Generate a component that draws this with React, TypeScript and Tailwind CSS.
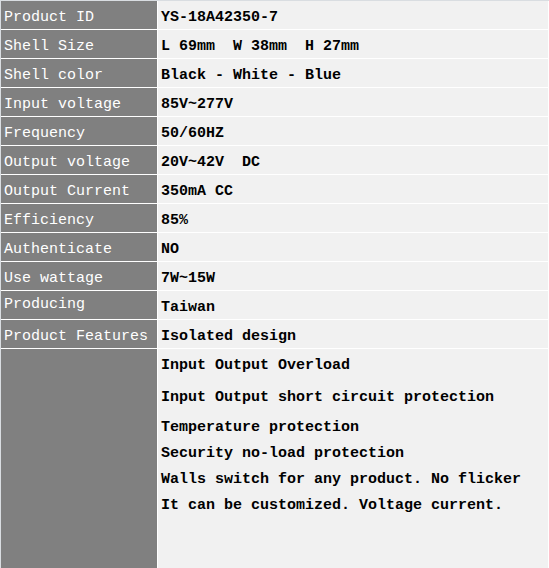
import React from "react";

// spec table rows
const specs: { label: string; value: string; tight?: boolean }[] = [
  { label: "Product ID", value: "YS-18A42350-7" },
  { label: "Shell Size", value: "L 69mm  W 38mm  H 27mm" },
  { label: "Shell color", value: "Black - White - Blue" },
  { label: "Input voltage", value: "85V~277V" },
  { label: "Frequency", value: "50/60HZ" },
  { label: "Output voltage", value: "20V~42V  DC" },
  { label: "Output Current", value: "350mA CC" },
  { label: "Efficiency", value: "85%" },
  { label: "Authenticate", value: "NO" },
  { label: "Use wattage", value: "7W~15W" },
  { label: "Producing", value: "Taiwan", tight: true },
  { label: "Product Features", value: "Isolated design" },
];

const App = () => {
  return (
    <div
      className="w-[549px] h-[568px] overflow-hidden bg-white border-t border-l border-[#d9dde1] text-[15px] whitespace-pre"
      style={{ fontFamily: '"Liberation Mono", "DejaVu Sans Mono", monospace' }}
    >
      <div className="flex flex-col gap-px">
        {specs.map((row) => (
          <div key={row.label} className="flex gap-px h-[28px]">
            <div
              className={`w-[156px] bg-[#808080] text-white pl-[3px] leading-[23px] ${
                row.tight ? "pt-[2px]" : "pt-[5px]"
              }`}
            >
              {row.label}
            </div>
            <div className="w-[390px] bg-[#f1f1f1] text-black font-bold pl-[3px] pt-[5px] leading-[23px]">
              {row.value}
            </div>
          </div>
        ))}

        {/* FEATURES LIST */}
        <div className="flex gap-px h-[240px]">
          <div className="w-[156px] bg-[#808080]" />
          <div className="w-[390px] bg-[#f1f1f1] text-black font-bold pl-[3px] leading-[26px]">
            <p className="mt-[4px]">Input Output Overload</p>
            <p className="mt-[6px]">Input Output short circuit protection</p>
            <p className="mt-[4px]">Temperature protection</p>
            <p>Security no-load protection</p>
            <p>Walls switch for any product. No flicker</p>
            <p>It can be customized. Voltage current.</p>
          </div>
        </div>
      </div>
    </div>
  );
};

export default App;
